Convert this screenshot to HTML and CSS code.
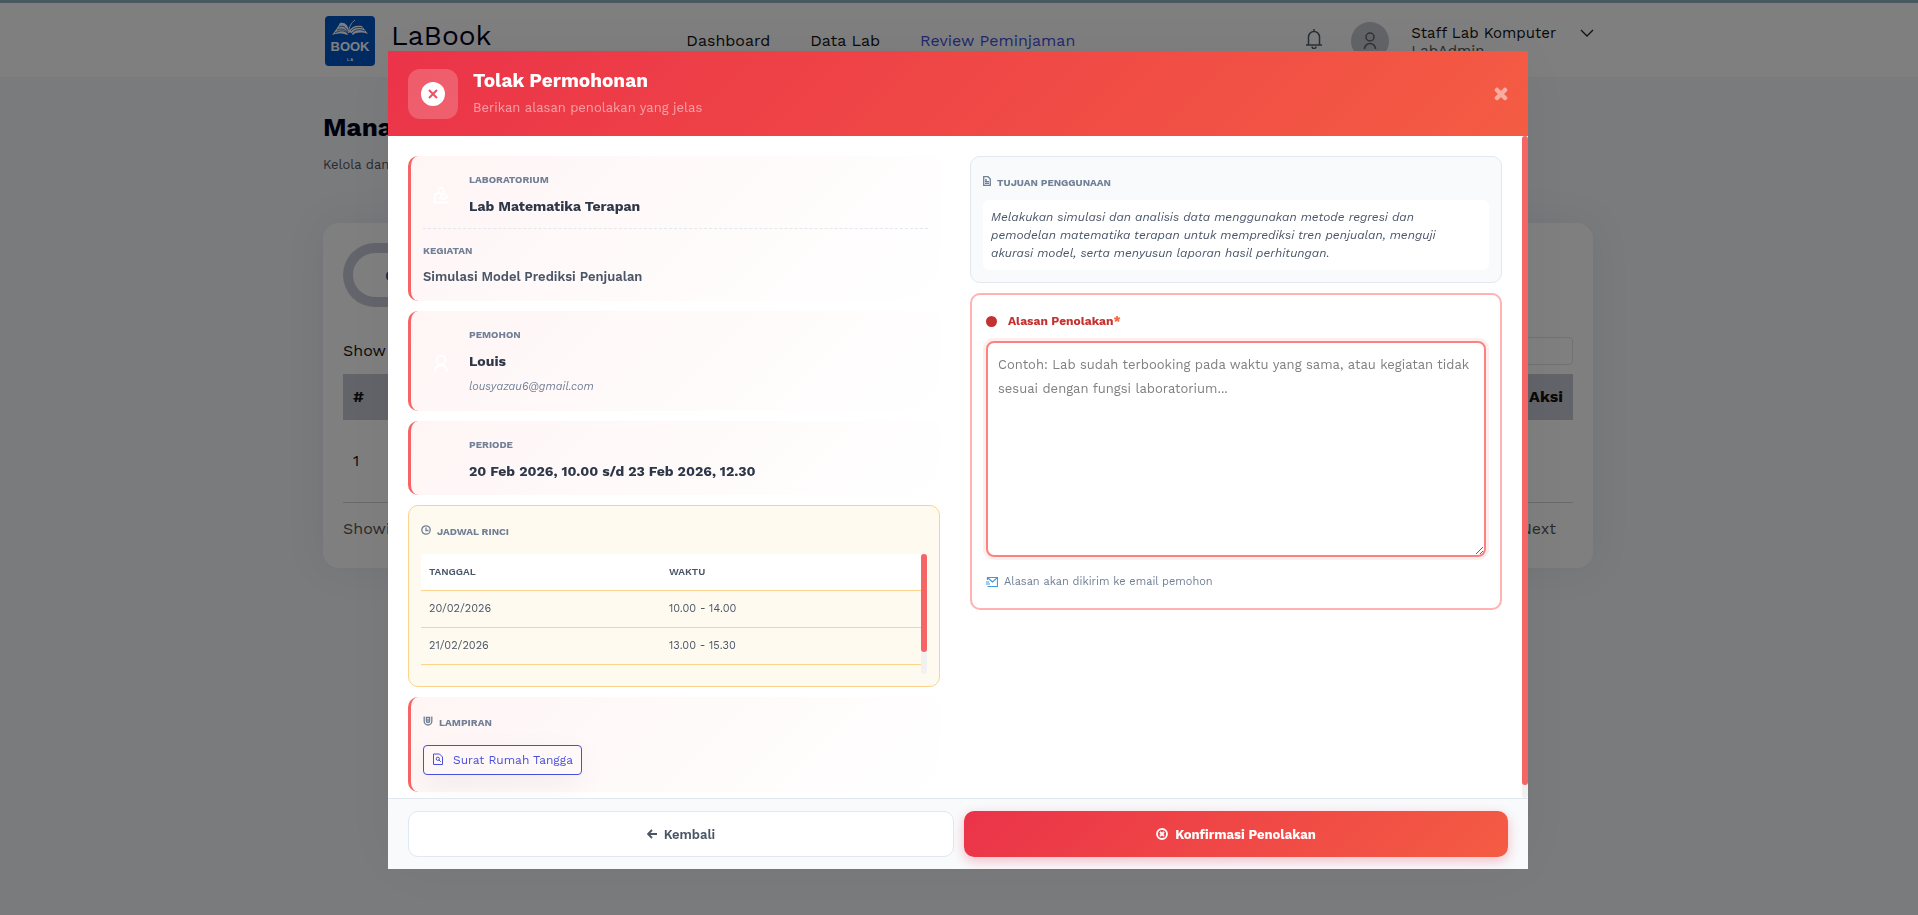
FILE: index.html
```
<!DOCTYPE html>
<html lang="id">
<head>
  <meta charset="UTF-8" />
  <meta name="viewport" content="width=device-width, initial-scale=1.0"/>
  <title>LaBook - Review Peminjaman</title>
  <link rel="stylesheet" href="styles.css">
</head>
<body>

<header class="topbar">
  <div class="container topbar-inner">
    <a class="brand" href="#">
      <svg class="brand-logo" viewBox="0 0 50 50">
        <rect width="50" height="50" rx="4" fill="#0055c4"/>
        <path d="M7 19c3-4 6-8 8-12 5-1 8 2 9 8 3-5 7-6 13-5l6 8c-6-2-12-2-15 1h-6c-4-2-9-2-15 0z" fill="#fff"/>
        <path d="M10 17c5-3 10-3 13 1M12 14c5-2 8-1 11 3M14 11c4-2 7 0 9 5M27 17c4-4 8-4 13-2M26 15c3-4 8-4 12-3" fill="none" stroke="#0055c4" stroke-width="0.800"/>
        <path d="M24 15c0-4 2-8 6-11" fill="none" stroke="#fff" stroke-width="1"/>
        <circle cx="25" cy="19" r="2.500" fill="#0055c4"/>
        <text x="25" y="35" text-anchor="middle" class="logo-word">BOOK</text>
        <text x="25" y="45" text-anchor="middle" class="logo-sub">L A</text>
      </svg>
      <span>LaBook</span>
    </a>
    <nav class="menu">
      <a href="#">Dashboard</a>
      <a href="#">Data Lab</a>
      <a href="#" class="active">Review Peminjaman</a>
    </nav>
    <div class="user">
      <svg class="bell" viewBox="0 0 16 20"><path d="M2.500 16V8a5.500 5.500 0 0 1 11 0v8M0 16h16M8 0v2.500M6 17.500a2 2 0 0 0 4 0" fill="none" stroke="#555e68" stroke-width="1.500"/></svg>
      <span class="avatar">
        <svg viewBox="0 0 14 18"><circle cx="7" cy="5" r="4" /><path d="M1.500 17a5.500 5.500 0 0 1 11 0"/></svg>
      </span>
      <div class="user-name">
        <span>Staff Lab Komputer</span>
        <small>LabAdmin</small>
      </div>
      <svg class="chevron" viewBox="0 0 14 8"><path d="M1 1l6 6 6-6" fill="none" stroke="#222" stroke-width="1.300"/></svg>
    </div>
  </div>
</header>

<div class="container page">
  <h1>Manajemen Peminjaman</h1>
  <p class="page-sub">Kelola dan review peminjaman</p>

  <section class="card">
    <div class="tabs"><button type="button">Cari</button></div>
    <div class="list-tools">
      <span>Show entries</span>
      <input type="search" aria-label="Search">
    </div>
    <table class="list">
      <thead>
        <tr><th>#</th><th class="right">Aksi</th></tr>
      </thead>
      <tbody>
        <tr><td>1</td><td></td></tr>
      </tbody>
    </table>
    <div class="list-foot">
      <span>Showing 1</span>
      <a href="#">Next</a>
    </div>
  </section>
</div>

<div class="overlay">
  <div class="modal" role="dialog" aria-labelledby="modalTitle">
    <div class="modal-header">
      <span class="modal-icon">
        <svg viewBox="0 0 24 24"><circle cx="12" cy="12" r="12" fill="#fff"/><path d="M8 8l8 8M16 8l-8 8" stroke="#ee5065" stroke-width="2"/></svg>
      </span>
      <div class="modal-heading">
        <h2 id="modalTitle">Tolak Permohonan</h2>
        <p>Berikan alasan penolakan yang jelas</p>
      </div>
      <button type="button" class="close" aria-label="Tutup">
        <svg viewBox="0 0 14 14"><path d="M3 3l8 8M11 3l-8 8" stroke="#fff" stroke-width="4.500" stroke-linecap="round"/></svg>
      </button>
    </div>

    <div class="modal-main">
      <div class="modal-body">
        <div class="col">
          <div class="info">
            <div class="info-row">
              <span class="info-icon">
                <svg viewBox="0 0 16 18"><path d="M0 16.500h16M2 16V9l4-3 3 4-3 3M5 4a3 3 0 1 1 5 3l5 4M8 14l7-3" fill="none" stroke="#fff" stroke-width="2"/></svg>
              </span>
              <div>
                <div class="label">LABORATORIUM</div>
                <div class="value">Lab Matematika Terapan</div>
              </div>
            </div>
            <div class="info-extra">
              <div class="label">KEGIATAN</div>
              <div class="value soft">Simulasi Model Prediksi Penjualan</div>
            </div>
          </div>

          <div class="info">
            <div class="info-row">
              <span class="info-icon">
                <svg viewBox="0 0 16 18"><circle cx="8" cy="6" r="4.500" fill="none" stroke="#fff" stroke-width="2"/><path d="M2 18c0-4 2.500-7 6-7s6 3 6 7" fill="none" stroke="#fff" stroke-width="2"/></svg>
              </span>
              <div>
                <div class="label">PEMOHON</div>
                <div class="value">Louis</div>
                <div class="email">lousyazau6@gmail.com</div>
              </div>
            </div>
          </div>

          <div class="info">
            <div class="info-row">
              <span class="info-icon"></span>
              <div>
                <div class="label">PERIODE</div>
                <div class="value">20 Feb 2026, 10.00 s/d 23 Feb 2026, 12.30</div>
              </div>
            </div>
          </div>

          <div class="schedule">
            <div class="label with-icon">
              <svg viewBox="0 0 10 10"><circle cx="5" cy="5" r="4.200"/><path d="M5 2.500V5.500h2.500"/></svg>
              JADWAL RINCI
            </div>
            <div class="schedule-main">
              <div class="schedule-scroll">
                <table>
                  <thead>
                    <tr><th>TANGGAL</th><th>WAKTU</th></tr>
                  </thead>
                  <tbody>
                    <tr><td>20/02/2026</td><td>10.00 - 14.00</td></tr>
                    <tr><td>21/02/2026</td><td>13.00 - 15.30</td></tr>
                    <tr><td></td><td></td></tr>
                  </tbody>
                </table>
              </div>
              <div class="scrollbar"><div class="thumb thumb-schedule"></div></div>
            </div>
          </div>

          <div class="info">
            <div class="label with-icon">
              <svg viewBox="0 0 10 10"><path d="M1.200.500v4.700a3.800 3.800 0 0 0 7.600 0V.500M3.400 5V1.500h3.200V5a1.600 1.600 0 0 1-3.200 0M5 3v2.500"/></svg>
              LAMPIRAN
            </div>
            <a class="file" href="#">
              <svg viewBox="0 0 10 12"><path d="M.5 1h6l3 3v7.500h-9z"/><circle cx="4.800" cy="5.800" r="1.600"/><path d="M6 7l1.800 1.800"/></svg>
              Surat Rumah Tangga
            </a>
          </div>
        </div>

        <div class="col">
          <div class="purpose">
            <div class="label with-icon">
              <svg class="doc" viewBox="0 0 8 10"><path d="M.700.700h4.300l2.300 2.300v6.300H.700zM2 4h2M2 5.700h4M2 7.400h4"/></svg>
              TUJUAN PENGGUNAAN
            </div>
            <p>Melakukan simulasi dan analisis data menggunakan metode regresi dan pemodelan matematika terapan untuk memprediksi tren penjualan, menguji akurasi model, serta menyusun laporan hasil perhitungan.</p>
          </div>

          <div class="reason">
            <label for="reason"><i class="dot"></i>Alasan Penolakan<b>*</b></label>
            <textarea id="reason" placeholder="Contoh: Lab sudah terbooking pada waktu yang sama, atau kegiatan tidak sesuai dengan fungsi laboratorium..."></textarea>
            <div class="hint">
              <svg viewBox="0 0 12 12"><path d="M1.500 4V1.500h10v9h-10M0 6h3M0 8h4M2 2l4.500 4L11 2" fill="none" stroke="#4299e1" stroke-width="1.200"/></svg>
              Alasan akan dikirim ke email pemohon
            </div>
          </div>
        </div>
      </div>
      <div class="scrollbar"><div class="thumb thumb-body"></div></div>
    </div>

    <div class="modal-footer">
      <button type="button" class="btn btn-back">
        <svg viewBox="0 0 10 10"><path d="M10 5H1M5 1L1 5l4 4"/></svg>
        Kembali
      </button>
      <button type="button" class="btn btn-reject">
        <svg viewBox="0 0 12 12"><circle cx="6" cy="6" r="5"/><path d="M4 4l4 4M8 4L4 8"/></svg>
        Konfirmasi Penolakan
      </button>
    </div>
  </div>
</div>

</body>
</html>
```
FILE: styles.css
```
  * {
    box-sizing: border-box;
  }
  body {
    font-family: "Work Sans", Inter, sans-serif;
    font-size: 16px;
    line-height: 24px;
    margin: 0;
    min-height: 100vh;
    color: #111;
    background-color: #f4f6fa;
    overflow: hidden;
  }
  h1, h2, p {
    margin: 0;
  }
  a {
    color: inherit;
    text-decoration: none;
  }
  button, input, textarea {
    font-family: inherit;
  }
  .container {
    max-width: 1272px;
    margin: 0 auto;
    padding-right: 2px;
  }

  /* top bar */
  .topbar {
    background-color: #fff;
    border-top: 3px solid #90b0bf;
  }
  .topbar-inner {
    height: 74px;
    display: flex;
    align-items: center;
    padding: 2px 1px 0 2px;
  }
  .brand {
    display: flex;
    gap: 16px;
    font-size: 28px;
    line-height: 40px;
    color: #00001a;
  }
  .brand-logo {
    width: 50px;
    height: 50px;
  }
  .logo-word {
    font: bold 13px "Liberation Sans Narrow", "Liberation Sans", sans-serif;
    fill: #fff;
  }
  .logo-sub {
    font: bold 4px "Liberation Sans", sans-serif;
    fill: #fff;
  }
  .menu {
    display: flex;
    gap: 40px;
    margin-left: 195px;
  }
  .menu .active {
    color: #4650dd;
  }
  .user {
    display: flex;
    align-items: center;
    margin-left: auto;
  }
  .bell {
    width: 16px;
    height: 20px;
    margin: 0 29px 4px 0;
  }
  .avatar {
    width: 38px;
    height: 38px;
    border-radius: 50%;
    background-color: #c7c9d1;
    display: flex;
    align-items: center;
    justify-content: center;
    margin-right: 22px;
  }
  .avatar svg {
    width: 14px;
    height: 18px;
    fill: none;
    stroke: #60646c;
    stroke-width: 1.5;
  }
  .user-name {
    display: flex;
    flex-direction: column;
    line-height: 18px;
    padding-top: 2px;
    font-size: 15px;
  }
  .user-name small {
    font-size: 15px;
    color: #555;
  }
  .chevron {
    width: 14px;
    height: 8px;
    margin: 0 0 16px 24px;
  }

  /* page behind the modal */
  .page h1 {
    font-size: 26px;
    line-height: 32px;
    margin-top: 34px;
    color: #00001a;
  }
  .page-sub {
    font-size: 13px;
    line-height: 20px;
    margin-top: 12px;
    color: #555;
  }
  .card {
    background-color: #fff;
    border-radius: 16px;
    margin-top: 48px;
    padding: 20px;
    height: 345px;
    box-shadow: 0 0 40px rgba(50, 50, 90, 0.08);
  }
  .tabs {
    display: inline-flex;
    padding: 10px;
    border-radius: 32px;
    background-color: #c9cbd8;
  }
  .tabs button {
    height: 44px;
    width: 120px;
    padding: 0 32px;
    border: none;
    border-radius: 22px;
    background-color: #fff;
    text-align: left;
    font-size: 16px;
    font-weight: 500;
    color: #0055c4;
  }
  .list-tools {
    display: flex;
    align-items: center;
    justify-content: space-between;
    margin-top: 30px;
  }
  .list-tools input {
    width: 200px;
    height: 28px;
    border: 1px solid #e3e3e3;
    border-radius: 4px;
    background-color: #fff;
  }
  .list {
    width: 100%;
    margin-top: 9px;
    border-collapse: collapse;
  }
  .list th {
    height: 46px;
    padding: 0 10px;
    background-color: #c6c8d2;
    text-align: left;
  }
  .list .right {
    text-align: right;
  }
  .list td {
    height: 82px;
    padding: 0 10px;
    border-bottom: 1px solid #d5d5d5;
  }
  .list-foot {
    display: flex;
    justify-content: space-between;
    margin-top: 14px;
    padding-right: 17px;
    color: #555;
  }

  /* modal */
  .overlay {
    position: fixed;
    inset: 0;
    background-color: rgba(0, 0, 0, 0.5);
    display: flex;
    align-items: center;
    justify-content: center;
    padding-right: 2px;
  }
  .modal {
    width: 1140px;
    max-width: 95%;
    max-height: calc(100vh - 97px);
    margin-top: 5px;
    display: flex;
    flex-direction: column;
    background-color: #fff;
    box-shadow: 0 0 60px rgba(0, 0, 0, 0.05);
  }
  .modal-header {
    display: flex;
    align-items: center;
    gap: 15px;
    height: 85px;
    flex-shrink: 0;
    padding: 0 20px;
    color: #fff;
    background: linear-gradient(135deg, #eb3349, #f45c43);
  }
  .modal-icon {
    width: 50px;
    height: 50px;
    border-radius: 12px;
    background-color: rgba(255, 255, 255, 0.2);
    display: flex;
    align-items: center;
    justify-content: center;
  }
  .modal-icon svg {
    width: 24px;
    height: 24px;
  }
  .modal-heading h2 {
    font-size: 19px;
    line-height: 28px;
  }
  .modal-heading p {
    font-size: 13px;
    line-height: 26px;
    opacity: 0.5;
  }
  .close {
    margin-left: auto;
    padding: 0;
    border: none;
    background: none;
    opacity: 0.5;
    cursor: pointer;
  }
  .close svg {
    display: block;
    width: 14px;
    height: 14px;
  }
  .modal-main {
    display: flex;
    flex: 1;
    min-height: 0;
  }
  .modal-body {
    flex: 1;
    display: grid;
    grid-template-columns: 1fr 1fr;
    align-items: start;
    gap: 30px;
    padding: 20px;
    overflow-y: auto;
    scrollbar-width: none;
  }
  .scrollbar {
    width: 6px;
    flex-shrink: 0;
    border-radius: 3px;
    background-color: #f1f1f1;
  }
  .thumb {
    border-radius: 3px;
    background-color: #f56565;
  }
  .thumb-body {
    height: 98%;
  }
  .thumb-schedule {
    height: 82%;
  }
  .col {
    display: flex;
    flex-direction: column;
    gap: 10px;
    min-width: 0;
  }

  .label {
    font-size: 10px;
    line-height: 24px;
    font-weight: bold;
    color: #718096;
  }
  .with-icon {
    display: flex;
    align-items: center;
    gap: 6px;
    line-height: 28px;
  }
  .with-icon svg {
    width: 10px;
    height: 10px;
    margin-bottom: 4px;
    fill: none;
    stroke: #718096;
    stroke-width: 1.3;
  }
  .with-icon .doc {
    width: 8px;
  }
  .value {
    font-size: 14px;
    line-height: 28px;
    padding-bottom: 2px;
    font-weight: bold;
    color: #2d3748;
  }
  .value.soft {
    font-size: 13px;
    font-weight: 600;
    color: #4a5568;
  }
  .info {
    padding: 12px 12px 8px;
    border-left: 3px solid #f56565;
    border-radius: 10px;
    background: linear-gradient(135deg, #fff5f5, #fff);
  }
  .info-row {
    display: flex;
    align-items: center;
    gap: 10px;
  }
  .info-icon {
    width: 36px;
    flex-shrink: 0;
    display: flex;
    justify-content: center;
  }
  .info-icon svg {
    width: 16px;
    height: 18px;
  }
  .info-extra {
    margin-top: 6px;
    padding-top: 10px;
    border-top: 1px dashed #e2e8f0;
  }
  .email {
    font-size: 11px;
    line-height: 20px;
    margin-bottom: 6px;
    font-style: italic;
    color: #718096;
  }
  .schedule {
    padding: 12px;
    border: 1px solid #fbd38d;
    border-radius: 10px;
    background-color: #fffaf0;
  }
  .schedule-main {
    display: flex;
    height: 120px;
    margin-top: 8px;
  }
  .schedule-scroll {
    flex: 1;
    overflow-y: auto;
    scrollbar-width: none;
  }
  .schedule table {
    width: 100%;
    border-collapse: separate;
    border-spacing: 0;
    font-size: 11px;
    line-height: 16px;
    color: #4a5568;
  }
  .schedule th,
  .schedule td {
    height: 37px;
    padding: 0 8px;
    text-align: left;
    border-bottom: 1px solid #fbd38d;
  }
  .schedule th {
    font-size: 10px;
    font-weight: 600;
    background-color: #fff;
  }
  .schedule th:first-child {
    width: 48%;
  }
  .file {
    display: flex;
    align-items: center;
    gap: 10px;
    width: fit-content;
    height: 30px;
    margin: 8px 0 9px;
    padding: 0 8px 0 9px;
    border: 1px solid #4650dd;
    border-radius: 4px;
    font-size: 12px;
    color: #4650dd;
    box-shadow: 0 10px 30px rgba(0, 0, 0, 0.05);
  }
  .file svg {
    width: 10px;
    height: 12px;
    margin-bottom: 3px;
    fill: none;
    stroke: #4650dd;
  }

  .purpose {
    padding: 12px;
    border: 1px solid #e2e8f0;
    border-radius: 10px;
    background-color: #f8fafc;
  }
  .purpose p {
    margin-top: 3px;
    padding: 8px;
    border-radius: 6px;
    background-color: #fff;
    font-size: 12px;
    line-height: 18px;
    font-style: italic;
    color: #4a5568;
  }
  .reason {
    padding: 14px;
    border: 2px solid #feb2b2;
    border-radius: 10px;
  }
  .reason label {
    display: flex;
    align-items: center;
    font-size: 12px;
    font-weight: bold;
    color: #c53030;
  }
  .reason label b {
    color: #f56b43;
  }
  .dot {
    width: 11px;
    height: 11px;
    border-radius: 50%;
    background-color: #c53030;
    margin-right: 11px;
  }
  .reason textarea {
    display: block;
    width: 100%;
    height: 216px;
    margin-top: 8px;
    padding: 10px;
    border: 2px solid #fc8181;
    border-radius: 8px;
    outline: none;
    box-shadow: 0 0 0 3px rgba(245, 101, 101, 0.1);
    font-size: 13px;
    line-height: 24px;
    resize: vertical;
  }
  .reason textarea::placeholder {
    color: #808080;
  }
  .hint {
    display: flex;
    align-items: center;
    gap: 6px;
    margin-top: 13px;
    font-size: 11px;
    color: #718096;
  }
  .hint svg {
    width: 12px;
    height: 12px;
  }

  .modal-footer {
    display: flex;
    gap: 10px;
    flex-shrink: 0;
    padding: 12px 20px;
    border-top: 1px solid #e2e8f0;
    background-color: #f8fafc;
  }
  .btn {
    flex: 1;
    height: 46px;
    display: flex;
    align-items: center;
    justify-content: center;
    gap: 7px;
    border: none;
    border-radius: 10px;
    font-size: 13px;
    font-weight: 600;
    cursor: pointer;
  }
  .btn svg {
    width: 10px;
    height: 10px;
    fill: none;
    stroke: currentColor;
    stroke-width: 1.8;
  }
  .btn-back {
    border: 1px solid #e2e8f0;
    background-color: #fff;
    color: #4a5568;
  }
  .btn-reject {
    color: #fff;
    font-weight: bold;
    background: linear-gradient(135deg, #eb3349, #f45c43);
    box-shadow: 0 4px 12px rgba(235, 51, 73, 0.3);
  }
  .btn-reject svg {
    width: 12px;
    height: 12px;
  }
```
